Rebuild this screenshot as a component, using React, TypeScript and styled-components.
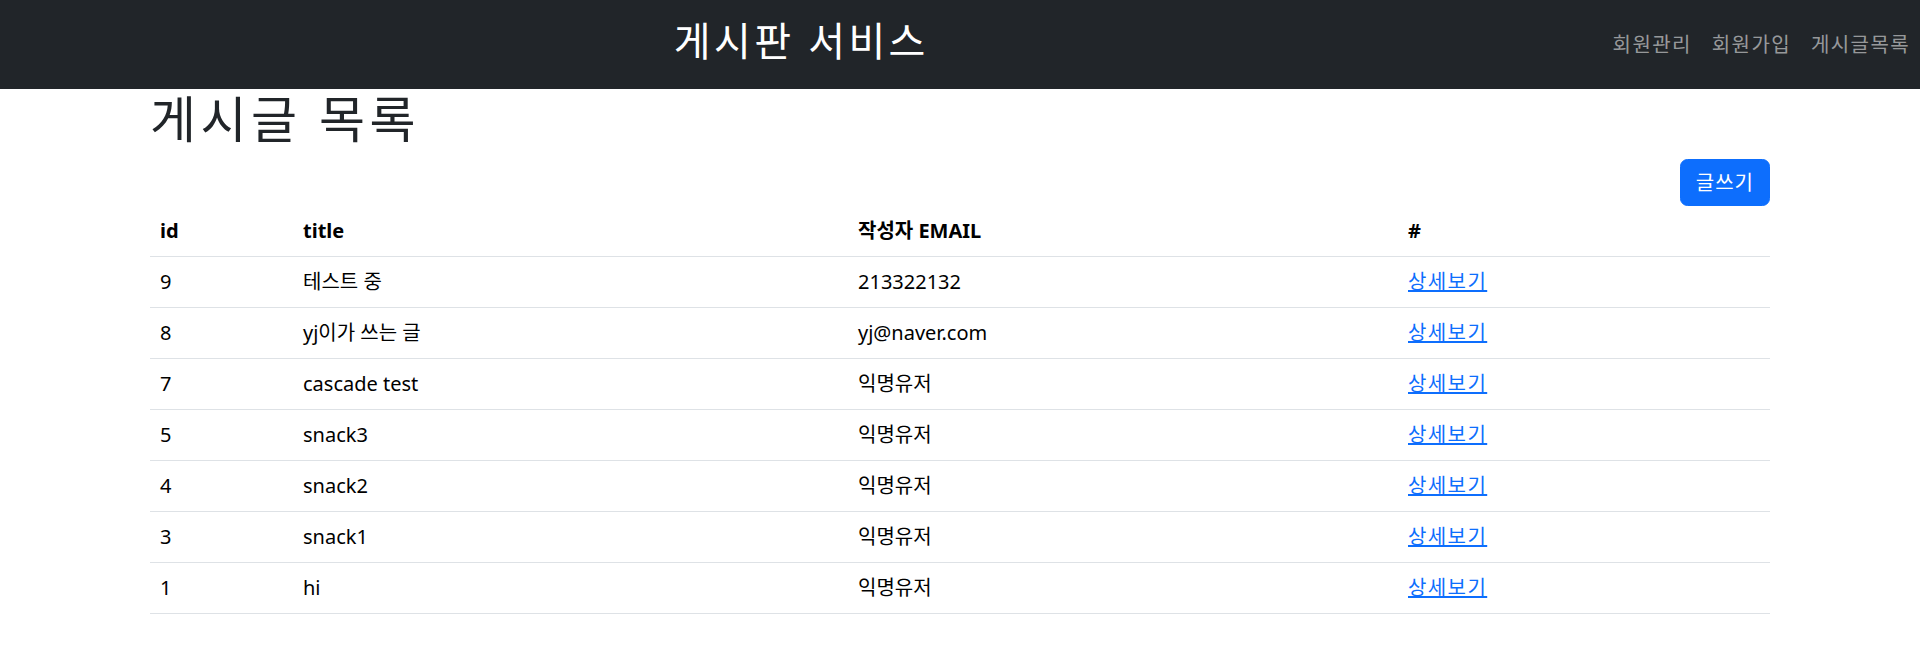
import React from "react";
import styled, { createGlobalStyle } from "styled-components";

interface Post {
  id: number;
  title: string;
  email: string;
}

const posts: Post[] = [
  { id: 9, title: "테스트 중", email: "213322132" },
  { id: 8, title: "yj이가 쓰는 글", email: "yj@naver.com" },
  { id: 7, title: "cascade test", email: "익명유저" },
  { id: 5, title: "snack3", email: "익명유저" },
  { id: 4, title: "snack2", email: "익명유저" },
  { id: 3, title: "snack1", email: "익명유저" },
  { id: 1, title: "hi", email: "익명유저" },
];

const navItems = ["회원관리", "회원가입", "게시글목록"];

export default function App() {
  return (
    <>
      <GlobalStyle />
      <S.Header>
        <S.Spacer />
        <S.Brand>게시판 서비스</S.Brand>
        <S.Nav>
          {navItems.map((item) => (
            <S.NavLink key={item} href="#">
              {item}
            </S.NavLink>
          ))}
        </S.Nav>
      </S.Header>

      <S.Container>
        <S.Title>게시글 목록</S.Title>
        <S.Toolbar>
          <S.WriteButton>글쓰기</S.WriteButton>
        </S.Toolbar>
        <S.Table>
          <colgroup>
            <col style={{ width: 143 }} />
            <col style={{ width: 555 }} />
            <col style={{ width: 550 }} />
            <col />
          </colgroup>
          <thead>
            <tr>
              <S.Th>id</S.Th>
              <S.Th>title</S.Th>
              <S.Th>작성자 EMAIL</S.Th>
              <S.Th>#</S.Th>
            </tr>
          </thead>
          <tbody>
            {posts.map((post) => (
              <tr key={post.id}>
                <S.Td>{post.id}</S.Td>
                <S.Td>{post.title}</S.Td>
                <S.Td>{post.email}</S.Td>
                <S.Td>
                  <S.DetailLink href="#">상세보기</S.DetailLink>
                </S.Td>
              </tr>
            ))}
          </tbody>
        </S.Table>
      </S.Container>
    </>
  );
}

const GlobalStyle = createGlobalStyle`
  * {
    box-sizing: border-box;
  }
  body {
    margin: 0;
    background: #fff;
    color: #212529;
    font-family: "Noto Sans", "Noto Sans CJK KR", sans-serif;
    font-size: 20px;
    line-height: 1.5;
  }
`;

// 한글 글리프가 원본(맑은 고딕)보다 좁아서 자간으로 폭을 맞춤
const S = {
  Header: styled.header`
    display: flex;
    justify-content: space-between;
    align-items: center;
    height: 89px;
    background-color: #212529;
  `,
  Spacer: styled.div`
    width: 0;
  `,
  Brand: styled.div`
    font-size: 40px;
    line-height: 48px;
    letter-spacing: 0.085em;
    color: #fff;
    margin-top: -8px;
  `,
  Nav: styled.nav`
    display: flex;
    align-items: center;
  `,
  NavLink: styled.a`
    padding: 10px 10px;
    font-size: 20px;
    line-height: 30px;
    letter-spacing: 0.07em;
    color: rgba(255, 255, 255, 0.55);
    text-decoration: none;
  `,
  Container: styled.main`
    width: 1620px;
    margin: 0 auto;
  `,
  Title: styled.h1`
    margin: 0 0 10px;
    font-size: 50px;
    font-weight: 400;
    line-height: 60px;
    letter-spacing: 0.09em;
    color: #212529;
  `,
  Toolbar: styled.div`
    display: flex;
    justify-content: flex-end;
  `,
  WriteButton: styled.button`
    padding: 7.5px 15px;
    font-family: inherit;
    font-size: 20px;
    line-height: 30px;
    letter-spacing: 0.05em;
    color: #fff;
    background-color: #0d6efd;
    border: 1px solid #0d6efd;
    border-radius: 7.5px;
    cursor: pointer;
  `,
  Table: styled.table`
    width: 100%;
    margin-bottom: 20px;
    border-collapse: collapse;
    table-layout: fixed;
    color: #000;
  `,
  Th: styled.th`
    padding: 10px;
    text-align: left;
    font-weight: 700;
    border-bottom: 1px solid #dee2e6;
  `,
  Td: styled.td`
    padding: 10px;
    border-bottom: 1px solid #dee2e6;
  `,
  DetailLink: styled.a`
    color: #0d6efd;
    letter-spacing: 0.07em;
    text-decoration: underline;
  `,
};
